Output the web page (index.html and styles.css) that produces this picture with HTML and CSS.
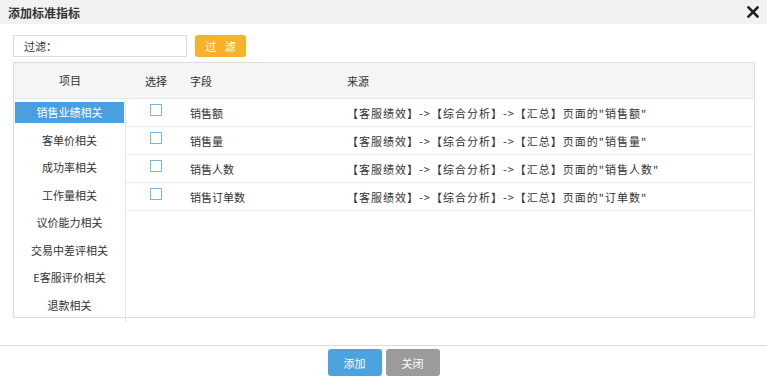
FILE: index.html
```html
<!DOCTYPE html>
<html>
<head>
    <title>添加标准指标</title>
    <link rel="stylesheet" href="styles.css">
</head>
<body>
    <div class="dialog-head">
        <span class="dialog-title">添加标准指标</span>
        <svg class="close" width="12" height="12" viewBox="0 0 12 12">
            <path d="M1.5 1.5 L10.5 10.5 M10.5 1.5 L1.5 10.5" stroke="#222" stroke-width="2.6" stroke-linecap="square"/>
        </svg>
    </div>
    <div class="filter">
        <div class="filter-input">过滤：</div>
        <button class="btn-filter">过 滤</button>
    </div>
    <div class="panel">
        <div class="side">
            <div class="side-head">项目</div>
            <ul class="side-list">
                <li class="active">销售业绩相关</li>
                <li>客单价相关</li>
                <li>成功率相关</li>
                <li>工作量相关</li>
                <li>议价能力相关</li>
                <li>交易中差评相关</li>
                <li>E客服评价相关</li>
                <li>退款相关</li>
            </ul>
        </div>
        <div class="main">
            <table>
                <thead>
                    <tr>
                        <th class="col-check">选择</th>
                        <th class="col-field">字段</th>
                        <th>来源</th>
                    </tr>
                </thead>
                <tbody id="rows"></tbody>
            </table>
        </div>
    </div>
    <div class="footer">
        <button class="btn btn-add">添加</button>
        <button class="btn btn-close">关闭</button>
    </div>
    <script>
        var fields = [
            ['销售额', '销售额'],
            ['销售量', '销售量'],
            ['销售人数', '销售人数'],
            ['销售订单数', '订单数']
        ];
        var tbody = document.getElementById('rows');
        fields.forEach(function(f) {
            tbody.innerHTML += '<tr><td class="col-check"><span class="checkbox"></span></td>' +
                '<td class="col-field">' + f[0] + '</td>' +
                '<td class="source">【客服绩效】-&gt;【综合分析】-&gt;【汇总】页面的"' + f[1] + '"</td></tr>';
        });
    </script>
</body>
</html>
```

FILE: styles.css
```css
body {
    font-family: "Noto Sans CJK SC", "Liberation Sans", sans-serif;
    font-size: 11px;
    margin: 0;
    color: #333;
    background: #fff;
}
.dialog-head {
    height: 24px;
    background: #f2f2f2;
    display: flex;
    align-items: center;
    justify-content: space-between;
    padding: 0 8px 0 8px;
}
.dialog-title {
    font-size: 12px;
    font-weight: bold;
    color: #333;
}
.filter {
    display: flex;
    gap: 8px;
    margin: 11px 0 0 13px;
}
.filter-input {
    width: 162px;
    height: 20px;
    line-height: 20px;
    border: 1px solid #ddd;
    padding-left: 10px;
    color: #333;
}
.btn-filter {
    width: 51px;
    height: 22px;
    border: none;
    border-radius: 3px;
    background: #f6b22b;
    color: #fff;
    font-family: inherit;
    font-size: 11px;
    letter-spacing: 3px;
    padding: 0 0 0 3px;
}
.panel {
    margin: 5px 0 0 13px;
    width: 740px;
    height: 254px;
    border: 1px solid #ddd;
    display: flex;
}
.side {
    width: 112px;
    display: flex;
    flex-direction: column;
}
.side-head {
    height: 35px;
    line-height: 35px;
    background: #f5f5f5;
    text-align: center;
    border-bottom: 1px solid #e6e6e6;
}
.side-list {
    flex: 1;
    list-style: none;
    margin: 0;
    padding: 3px 1px 0 1px;
    border-right: 1px solid #e6e6e6;
}
.side-list li {
    height: 21px;
    line-height: 21px;
    margin-bottom: 6.5px;
    text-align: center;
}
.side-list li.active {
    background: #4a9fdf;
    color: #fff;
}
.main {
    flex: 1;
}
table {
    width: 100%;
    border-collapse: collapse;
}
th {
    height: 35px;
    background: #f5f5f5;
    font-weight: normal;
    text-align: left;
    padding: 0 4px;
    border-bottom: 1px solid #e6e6e6;
}
td {
    height: 27px;
    padding: 0 4px;
    border-bottom: 1px solid #ececec;
}
.col-check {
    width: 52px;
    text-align: center;
}
.col-field {
    width: 149px;
}
.source {
    letter-spacing: 1px;
}
.checkbox {
    display: inline-block;
    width: 10px;
    height: 10px;
    border: 1px solid #7ab6e2;
    vertical-align: -1px;
    position: relative;
    top: -3px;
}
.footer {
    margin-top: 27px;
    border-top: 1px solid #dcdcdc;
    padding-top: 3px;
    display: flex;
    justify-content: center;
    gap: 4px;
}
.btn {
    width: 54px;
    height: 27px;
    border: none;
    border-radius: 3px;
    color: #fff;
    font-family: inherit;
    font-size: 11px;
    padding: 0;
}
.btn-add {
    background: #4ba3e0;
}
.btn-close {
    background: #9b9b9b;
}
```
